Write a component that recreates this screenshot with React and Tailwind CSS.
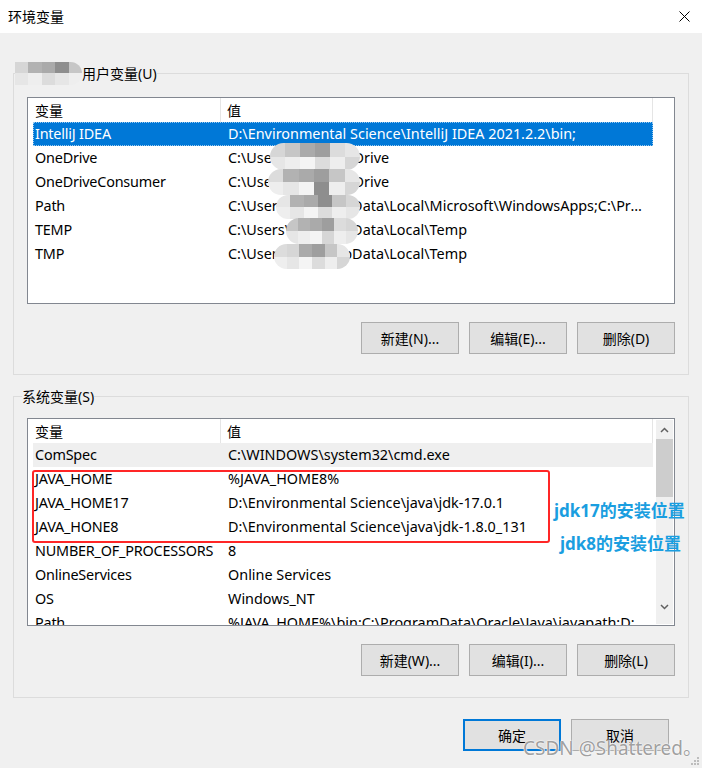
import React from 'react';

const FONT = "font-['Noto_Sans','Noto_Sans_CJK_SC',sans-serif]";

const CELL = {
  a: 'bg-[#d6d6d6]',
  b: 'bg-[#b2b2b2]',
  c: 'bg-[#aaaaaa]',
  d: 'bg-[#8e8e8e]',
  e: 'bg-[#c6c6c6]',
  f: 'bg-[#e6e6e6]',
  g: 'bg-[#eeeeee]',
  h: 'bg-[#dcdcdc]',
  i: 'bg-[#f4f4f4]',
  j: 'bg-[#9e9e9e]',
};

const userRows = [
  ['IntelliJ IDEA', 'D:\\Environmental Science\\IntelliJ IDEA 2021.2.2\\bin;'],
  ['OneDrive', 'C:\\Users\\user\\OneDrive'],
  ['OneDriveConsumer', 'C:\\Users\\user\\OneDrive'],
  ['Path', 'C:\\Users\\user\\AppData\\Local\\Microsoft\\WindowsApps;C:\\Program Files\\JetBrains'],
  ['TEMP', 'C:\\Users\\user\\AppData\\Local\\Temp'],
  ['TMP', 'C:\\Users\\user\\AppData\\Local\\Temp'],
];

const sysRows = [
  ['ComSpec', 'C:\\WINDOWS\\system32\\cmd.exe'],
  ['JAVA_HOME', '%JAVA_HOME8%'],
  ['JAVA_HOME17', 'D:\\Environmental Science\\java\\jdk-17.0.1'],
  ['JAVA_HONE8', 'D:\\Environmental Science\\java\\jdk-1.8.0_131'],
  ['NUMBER_OF_PROCESSORS', '8'],
  ['OnlineServices', 'Online Services'],
  ['OS', 'Windows_NT'],
  ['Path', '%JAVA_HOME%\\bin;C:\\ProgramData\\Oracle\\Java\\javapath;D:\\tools'],
];

// pixelated smear used to hide the user name
function Mosaic({ rows, className }) {
  return (
    <div className={`flex flex-col overflow-hidden rounded-full ${className}`}>
      {rows.map((r, i) => (
        <div key={i} className="flex flex-1">
          {r.split('').map((k, j) => (
            <div key={j} className={`flex-1 ${CELL[k]}`} />
          ))}
        </div>
      ))}
    </div>
  );
}

function Header() {
  return (
    <div className="flex h-[24px] shrink-0 items-center text-[14px] text-black">
      <div className="flex h-full w-[193px] items-center border-r border-[#e5e5e5] pl-[7px]">变量</div>
      <div className="flex h-full w-[432px] items-center border-r border-[#e5e5e5] pl-[6px]">值</div>
    </div>
  );
}

function Row({ name, value, selected, hover }) {
  let tone = 'text-black';
  if (selected) tone = 'bg-[#0078d7] text-white outline-1 outline-dotted outline-[#99c9ef] -outline-offset-1';
  if (hover) tone = 'bg-[#efefef] text-black';
  return (
    <div className={`ml-[5px] flex h-[24px] w-[620px] shrink-0 items-center text-[14.4px] ${tone}`}>
      <div className="w-[188px] whitespace-nowrap pl-[2px] tracking-[-0.2px]">{name}</div>
      <div className="flex-1 truncate pl-[7px] pr-[6px]">{value}</div>
    </div>
  );
}

function Button({ children, primary }) {
  return (
    <button
      type="button"
      className={`flex h-[32px] w-[98px] items-center justify-center bg-[#e1e1e1] text-[14px] text-black ${
        primary ? 'border-2 border-[#0078d7]' : 'border border-[#adadad]'
      }`}
    >
      {children}
    </button>
  );
}

function Chevron({ up }) {
  return (
    <svg width="9" height="6" viewBox="0 0 9 6" className="text-[#606060]">
      <path d={up ? 'M1 5 L4.5 1.5 L8 5' : 'M1 1 L4.5 4.5 L8 1'} fill="none" stroke="currentColor" strokeWidth="1.5" />
    </svg>
  );
}

export default function App() {
  return (
    <div className={`relative flex h-[768px] w-[702px] flex-col overflow-hidden bg-[#f0f0f0] ${FONT}`}>
      {/* title bar */}
      <div className="flex h-[33px] shrink-0 items-center justify-between bg-white pl-[8px] pr-[12px]">
        <span className="text-[14px] text-black">环境变量</span>
        <svg width="11" height="11" viewBox="0 0 11 11">
          <path d="M0.5 0.5 L10.5 10.5 M10.5 0.5 L0.5 10.5" stroke="#000" strokeWidth="1" />
        </svg>
      </div>

      {/* user variables */}
      <fieldset className="ml-[13px] mt-[29px] w-[676px] border border-[#dcdcdc] px-[13px] pb-[20px]">
        <legend className="-ml-[12px] flex h-[22px] items-center text-[14px] text-black">
          <Mosaic rows={['abcde', 'fghfg']} className="h-[23px] w-[67px] rounded-l-none" />
          <span>用户变量(U)</span>
        </legend>
        <div className="relative mt-[13px] flex h-[207px] flex-col overflow-hidden border border-[#828790] bg-white">
          <Header />
          {userRows.map(([n, v], i) => (
            <Row key={n} name={n} value={v} selected={i === 0} />
          ))}
          <Mosaic rows={['aecjhf', 'fgihga']} className="absolute left-[242px] top-[45px] h-[27px] w-[90px]" />
          <Mosaic rows={['hbcjef', 'gfidga']} className="absolute left-[240px] top-[71px] h-[26px] w-[92px]" />
          <Mosaic rows={['fbcdea', 'gfihgf']} className="absolute left-[248px] top-[97px] h-[24px] w-[84px]" />
          <Mosaic rows={['ebcjha', 'fgiagf']} className="absolute left-[258px] top-[120px] h-[26px] w-[72px]" />
          <Mosaic rows={['hacjef', 'gfihga']} className="absolute left-[246px] top-[146px] h-[25px] w-[76px]" />
        </div>
        <div className="mt-[18px] flex justify-end gap-[10px]">
          <Button>新建(N)...</Button>
          <Button>编辑(E)...</Button>
          <Button>删除(D)</Button>
        </div>
      </fieldset>

      {/* system variables */}
      <fieldset className="ml-[13px] mt-[10px] w-[676px] border border-[#dcdcdc] px-[13px] pb-[21px]">
        <legend className="-ml-[5px] flex h-[22px] items-center text-[14px] text-black">系统变量(S)</legend>
        <div className="relative mt-[11px] flex h-[208px] border border-[#828790] bg-white">
          <div className="flex flex-1 flex-col overflow-hidden">
            <Header />
            {sysRows.map(([n, v], i) => (
              <Row key={n} name={n} value={v} hover={i === 0} />
            ))}
          </div>
          <div className="my-[1px] mr-[1px] flex w-[17px] flex-col bg-[#f0f0f0]">
            <div className="flex h-[19px] items-center justify-center">
              <Chevron up />
            </div>
            <div className="h-[58px] bg-[#cdcdcd]" />
            <div className="flex-1" />
            <div className="flex h-[26px] items-center justify-center pb-[8px]">
              <Chevron />
            </div>
          </div>
          <div className="pointer-events-none absolute left-[4px] top-[51px] h-[73px] w-[518px] rounded-[3px] border-2 border-[#ff2626]" />
        </div>
        <div className="mt-[18px] flex justify-end gap-[10px]">
          <Button>新建(W)...</Button>
          <Button>编辑(I)...</Button>
          <Button>删除(L)</Button>
        </div>
      </fieldset>

      {/* dialog buttons */}
      <div className="mt-[21px] flex justify-end gap-[10px] pr-[33px]">
        <Button primary>确定</Button>
        <Button>取消</Button>
      </div>

      {/* annotations */}
      <div className="absolute left-[554px] top-[499px] text-[17px] font-bold leading-[24px] text-[#1a9ee0]">jdk17的安装位置</div>
      <div className="absolute left-[560px] top-[532px] text-[17px] font-bold leading-[24px] text-[#1a9ee0]">jdk8的安装位置</div>

      {/* watermark */}
      <div className="pointer-events-none absolute left-[523px] top-[735px] text-[19px] leading-[26px] text-[#a0a0a0] [text-shadow:0_0_1px_#fff,0_0_1px_#fff,0_0_2px_#fff]">
        CSDN @Shattered。
      </div>

      {/* resize grip */}
      <svg width="10" height="10" viewBox="0 0 10 10" className="absolute bottom-[2px] right-[2px]">
        <rect x="7" y="1" width="2" height="2" fill="#bdbdbd" />
        <rect x="4" y="4" width="2" height="2" fill="#bdbdbd" />
        <rect x="7" y="4" width="2" height="2" fill="#bdbdbd" />
        <rect x="1" y="7" width="2" height="2" fill="#bdbdbd" />
        <rect x="4" y="7" width="2" height="2" fill="#bdbdbd" />
        <rect x="7" y="7" width="2" height="2" fill="#bdbdbd" />
      </svg>
    </div>
  );
}
